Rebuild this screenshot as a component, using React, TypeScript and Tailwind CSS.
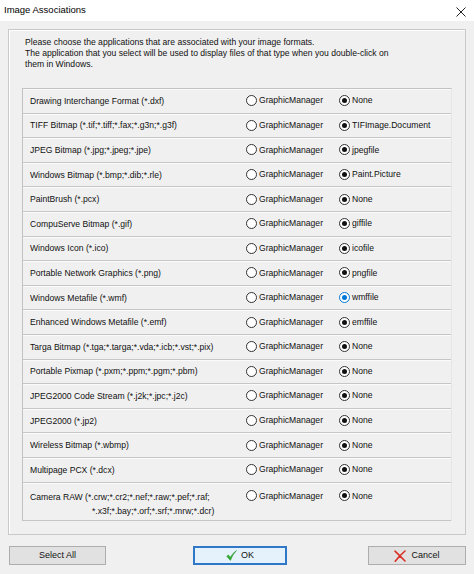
import { FC } from "react";

interface Row {
  label: string;
  label2?: string;
  value: string;
  focus?: boolean;
}

const rows: Row[] = [
  { label: "Drawing Interchange Format (*.dxf)", value: "None" },
  { label: "TIFF Bitmap (*.tif;*.tiff;*.fax;*.g3n;*.g3f)", value: "TIFImage.Document" },
  { label: "JPEG Bitmap (*.jpg;*.jpeg;*.jpe)", value: "jpegfile" },
  { label: "Windows Bitmap (*.bmp;*.dib;*.rle)", value: "Paint.Picture" },
  { label: "PaintBrush (*.pcx)", value: "None" },
  { label: "CompuServe Bitmap (*.gif)", value: "giffile" },
  { label: "Windows Icon (*.ico)", value: "icofile" },
  { label: "Portable Network Graphics (*.png)", value: "pngfile" },
  { label: "Windows Metafile (*.wmf)", value: "wmffile", focus: true },
  { label: "Enhanced Windows Metafile (*.emf)", value: "emffile" },
  { label: "Targa Bitmap (*.tga;*.targa;*.vda;*.icb;*.vst;*.pix)", value: "None" },
  { label: "Portable Pixmap (*.pxm;*.ppm;*.pgm;*.pbm)", value: "None" },
  { label: "JPEG2000 Code Stream (*.j2k;*.jpc;*.j2c)", value: "None" },
  { label: "JPEG2000 (*.jp2)", value: "None" },
  { label: "Wireless Bitmap (*.wbmp)", value: "None" },
  { label: "Multipage PCX (*.dcx)", value: "None" },
  {
    label: "Camera RAW (*.crw;*.cr2;*.nef;*.raw;*.pef;*.raf;",
    label2: "*.x3f;*.bay;*.orf;*.srf;*.mrw;*.dcr)",
    value: "None",
  },
];

const Radio: FC<{ checked?: boolean; focus?: boolean }> = ({ checked, focus }) => (
  <span
    className={
      "w-[11px] h-[11px] rounded-full border bg-white flex items-center justify-center shrink-0 " +
      (focus ? "border-[#0078d7]" : "border-[#333333]")
    }
  >
    {checked && (
      <span
        className={
          "w-[5px] h-[5px] rounded-full " + (focus ? "bg-[#0078d7]" : "bg-[#111111]")
        }
      />
    )}
  </span>
);

const App: FC = () => {
  return (
    <div
      className="w-[474px] h-[574px] bg-[#f0f0f0] flex flex-col text-[#111111] overflow-hidden"
      style={{ fontFamily: '"Liberation Sans", Arial, sans-serif' }}
    >
      <div className="h-[21px] bg-white flex items-center justify-between pl-[4px] pr-[8px]">
        <span className="text-[9.5px] text-black">Image Associations</span>
        <svg width="10" height="10" viewBox="0 0 10 10" className="mt-[2px]">
          <path d="M0.5 0.5 L9.5 9.5 M9.5 0.5 L0.5 9.5" stroke="#222" strokeWidth="1" />
        </svg>
      </div>

      <div className="mt-[8px] mx-[8px] h-[506px] border border-[#c9c9c9] shadow-[inset_1px_1px_0_#ffffff] flex flex-col">
        <div className="pl-[16px] pt-[7px] text-[8.6px] leading-[11px]">
          <div>Please choose the applications that are associated with your image formats.</div>
          <div>The application that you select will be used to display files of that type when you double-click on</div>
          <div>them in Windows.</div>
        </div>

        <div className="mt-[18px] ml-[13px] mr-[13px] border-l border-t border-[#c2c2c2] border-r-[#e6e6e6] border-r flex flex-col text-[8.6px]">
          {rows.map((row, i) => (
            <div
              key={i}
              className={
                "flex border-b border-[#c6c6c6] shadow-[inset_0_1px_0_#fbfbfb] " +
                (row.label2 ? "h-[38px] items-start pt-[7px]" : "h-[24.6px] items-center")
              }
            >
              <div className="w-[223px] pl-[7px] leading-[14px] shrink-0">
                <div className="whitespace-nowrap">{row.label}</div>
                {row.label2 && <div className="pl-[62px] whitespace-nowrap">{row.label2}</div>}
              </div>
              <div className="w-[93px] flex items-center gap-[2px] shrink-0">
                <Radio />
                <span>GraphicManager</span>
              </div>
              <div className="flex items-center gap-[2px]">
                <Radio checked focus={row.focus} />
                <span>{row.value}</span>
              </div>
            </div>
          ))}
        </div>
      </div>

      <div className="mt-[11px] flex items-center pl-[9px] pr-[8px] text-[9px]">
        <button className="w-[97px] h-[19px] bg-[#e1e1e1] border border-[#adadad] flex items-center justify-center">
          Select All
        </button>
        <button className="ml-[87px] w-[94px] h-[19px] bg-[#e5f1fb] border-2 border-[#2f78c8] flex items-center justify-center gap-[4px]">
          <svg width="11" height="11" viewBox="0 0 12 12">
            <path
              d="M0.8 6.8 L2.6 5.4 L4.6 8 Q7.2 3.4 11.4 0.6 Q7.6 4.4 4.8 11.4 Z"
              fill="#2eae2e"
              stroke="#1f8a1f"
              strokeWidth="0.5"
            />
          </svg>
          <span>OK</span>
        </button>
        <button className="ml-auto w-[98px] h-[19px] bg-[#e1e1e1] border border-[#adadad] flex items-center justify-center gap-[5px]">
          <svg width="12" height="12" viewBox="0 0 12 12">
            <path d="M1 1.2 Q6 6 11 11 M11 1 Q5.5 5.8 1.2 11.2" stroke="#d93025" strokeWidth="1.6" fill="none" strokeLinecap="round" />
          </svg>
          <span>Cancel</span>
        </button>
      </div>
    </div>
  );
};

export default App;
